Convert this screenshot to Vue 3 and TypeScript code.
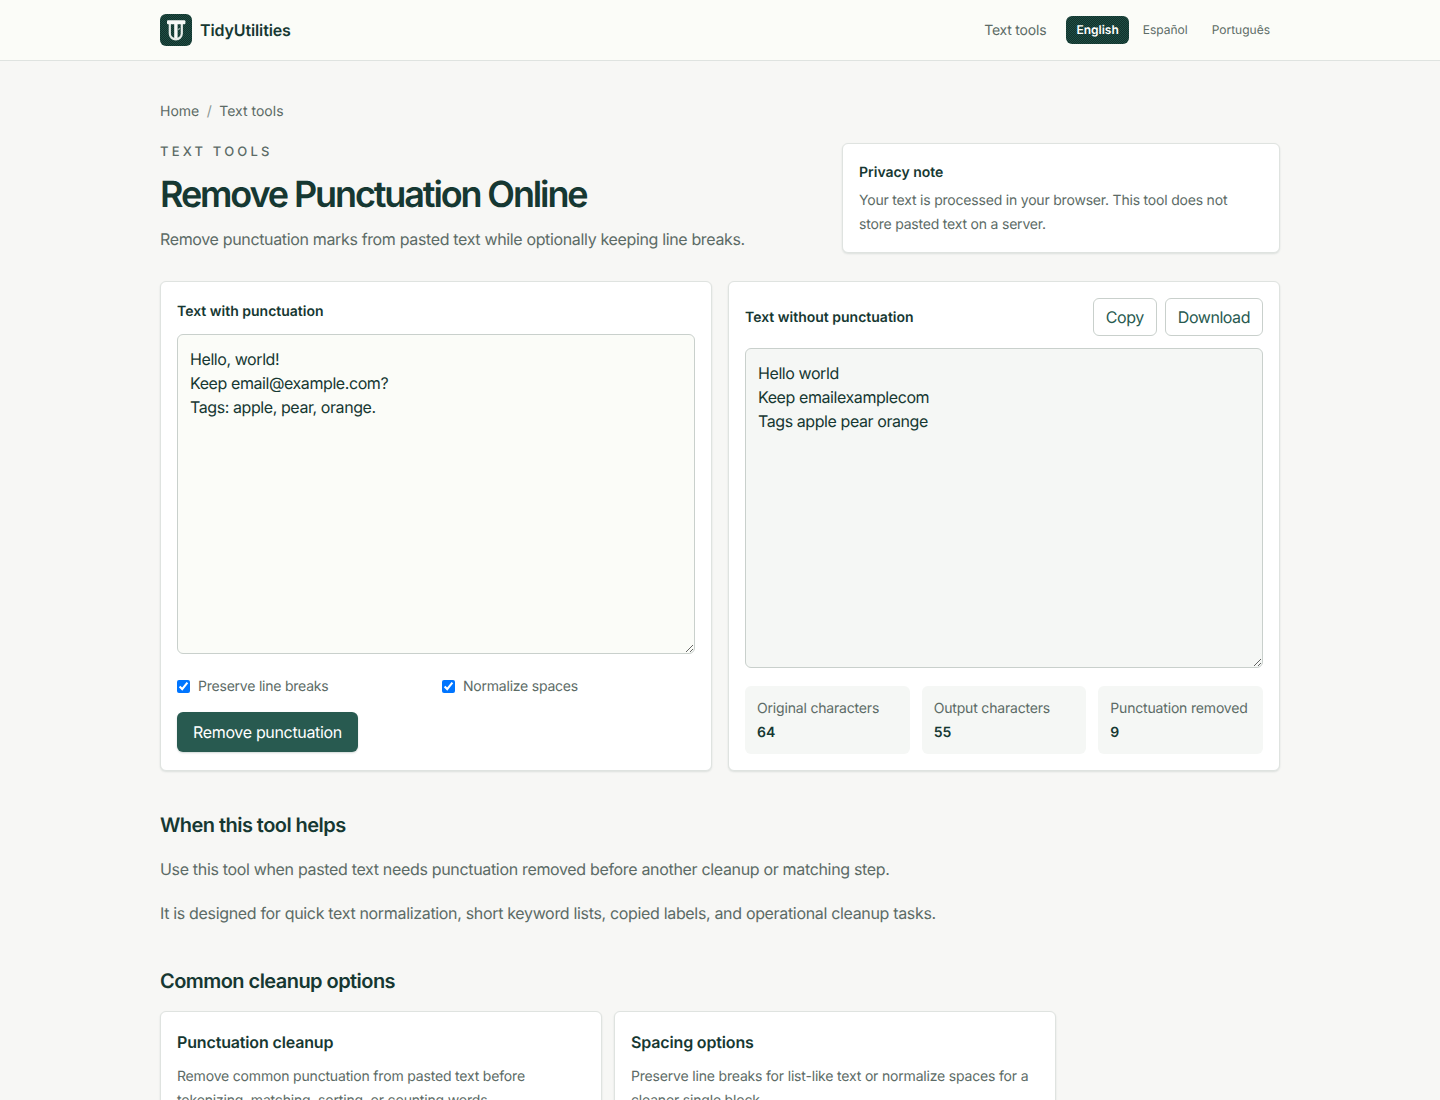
<script setup lang="ts">
import { ref, computed } from 'vue'

const input = ref('Hello, world!\nKeep email@example.com?\nTags: apple, pear, orange.')
const keepBreaks = ref(true)
const normalize = ref(true)
const output = ref('Hello world\nKeep emailexamplecom\nTags apple pear orange')

function clean() {
  let s = input.value.replace(/[.,!?:;@'"()-]/g, '')
  if (!keepBreaks.value) s = s.replace(/\n+/g, ' ')
  if (normalize.value) s = s.replace(/[ \t]+/g, ' ')
  output.value = s
}

const stats = computed(() => [
  { label: 'Original characters', value: 64 },
  { label: 'Output characters', value: 55 },
  { label: 'Punctuation removed', value: 9 },
])

const options = [
  { title: 'Punctuation cleanup', text: 'Remove common punctuation from pasted text before tokenizing, matching, sorting, or counting words.' },
  { title: 'Spacing options', text: 'Preserve line breaks for list-like text or normalize spaces for a cleaner single block.' },
]
</script>

<template>
  <header class="topbar">
    <div class="topbar-in">
      <a class="brand" href="#">
        <svg class="logo" width="32" height="32" viewBox="0 0 32 32" aria-hidden="true">
          <defs>
            <pattern id="dots" width="2" height="2" patternUnits="userSpaceOnUse">
              <rect width="2" height="2" fill="#12302b" />
              <rect width="1" height="1" fill="#1e4f45" />
              <rect x="1" y="1" width="1" height="1" fill="#1e4f45" />
            </pattern>
          </defs>
          <rect width="32" height="32" rx="6" fill="url(#dots)" />
          <path d="M9.8 10v9.4a6 6 0 0 0 12 0V10" fill="none" stroke="#e6ebe8" stroke-width="2.2" />
          <path d="M14.2 10h3.4v14.5h-3.4z" fill="#f7f9f7" />
          <rect x="7" y="6.3" width="18.4" height="4" rx="1" fill="#f7f9f7" />
          <path d="M20 14.5c-.9 0-1.4.5-1.4 1.4" fill="none" stroke="#a9b8b3" stroke-width="1.2" />
        </svg>
        <span>TidyUtilities</span>
      </a>
      <nav class="nav">
        <a class="nav-main" href="#">Text tools</a>
        <a class="lang active" href="#">English</a>
        <a class="lang" href="#">Español</a>
        <a class="lang" href="#">Português</a>
      </nav>
    </div>
  </header>

  <main class="page">
    <div class="crumbs">
      <a href="#">Home</a><span class="sep">/</span><a href="#">Text tools</a>
    </div>

    <section class="hero">
      <div class="hero-text">
        <p class="eyebrow">TEXT TOOLS</p>
        <h1>Remove Punctuation Online</h1>
        <p class="lead">Remove punctuation marks from pasted text while optionally keeping line breaks.</p>
      </div>
      <aside class="card privacy">
        <h2>Privacy note</h2>
        <p>Your text is processed in your browser. This tool does not store pasted text on a server.</p>
      </aside>
    </section>

    <section class="tool">
      <div class="card panel">
        <label class="field-label" for="src">Text with punctuation</label>
        <textarea id="src" v-model="input" class="box"></textarea>
        <div class="checks">
          <label><input v-model="keepBreaks" type="checkbox" /> Preserve line breaks</label>
          <label><input v-model="normalize" type="checkbox" /> Normalize spaces</label>
        </div>
        <button class="primary" @click="clean">Remove punctuation</button>
      </div>

      <div class="card panel">
        <div class="out-head">
          <label class="field-label flat" for="dst">Text without punctuation</label>
          <div class="actions">
            <button class="ghost">Copy</button>
            <button class="ghost">Download</button>
          </div>
        </div>
        <textarea id="dst" v-model="output" class="box readonly" readonly></textarea>
        <div class="stats">
          <div v-for="s in stats" :key="s.label" class="stat">
            <span>{{ s.label }}</span>
            <strong>{{ s.value }}</strong>
          </div>
        </div>
      </div>
    </section>

    <section class="copy">
      <h2>When this tool helps</h2>
      <p>Use this tool when pasted text needs punctuation removed before another cleanup or matching step.</p>
      <p>It is designed for quick text normalization, short keyword lists, copied labels, and operational cleanup tasks.</p>
    </section>

    <section class="copy opts">
      <h2>Common cleanup options</h2>
      <div class="opt-grid">
        <div v-for="o in options" :key="o.title" class="card opt">
          <h3>{{ o.title }}</h3>
          <p>{{ o.text }}</p>
        </div>
      </div>
    </section>
  </main>
</template>

<style>
html, body { margin: 0; background: #f7f7f5; }
</style>

<style scoped>
* { box-sizing: border-box; }
.topbar, .page { font-family: Inter, "Liberation Sans", sans-serif; color: #163832; text-rendering: geometricPrecision; }
.topbar { height: 61px; background: #fbfcf8; border-bottom: 1px solid #dfe3e0; }
.topbar-in { width: 1120px; height: 60px; margin: 0 auto; display: flex; align-items: center; justify-content: space-between; }
.brand { display: flex; align-items: center; gap: 8px; font-size: 16px; font-weight: 600; letter-spacing: -0.12px; color: #163832; text-decoration: none; }
.logo { display: block; }
.nav { display: flex; align-items: center; }
.nav a { text-decoration: none; color: #5c6b66; }
.nav-main { font-size: 14px; letter-spacing: -0.2px; margin-right: 20px; }
.lang { font-size: 12px; padding: 0 10px; height: 28px; line-height: 28px; border-radius: 6px; margin-right: 4px; }
.lang:last-child { margin-right: 0; }
.nav a.active { background: conic-gradient(#12302b 25%, #1e4f45 0 50%, #12302b 0 75%, #1e4f45 0) 0 0 / 2px 2px; color: #fff; font-weight: 600; }

.page { width: 1120px; margin: 0 auto; padding-top: 42px; }
.crumbs { font-size: 14px; line-height: 17px; color: #5c6b66; }
.crumbs a { color: #5c6b66; text-decoration: none; }
.sep { margin: 0 7.5px; color: #8a9692; }

.hero { display: flex; justify-content: space-between; align-items: flex-start; margin-top: 23px; }
.hero-text { width: 650px; }
.eyebrow { margin: 0; font-size: 13px; line-height: 18px; font-weight: 500; letter-spacing: 3.2px; color: #5c6b66; }
h1 { margin: 12px 0 0; font-size: 36px; line-height: 43px; font-weight: 600; letter-spacing: -2.12px; color: #163832; }
.lead { margin: 11px 0 0; font-size: 16px; line-height: 24px; letter-spacing: -0.35px; color: #5c6b66; }

.card { background: #fff; border: 1px solid #dfe3e0; border-radius: 6px; box-shadow: 0 1px 2px rgba(22, 56, 50, 0.12); }
.privacy { width: 438px; padding: 17px 16px 15px; }
.privacy h2 { margin: 0 0 4px; font-size: 14px; line-height: 24px; font-weight: 600; }
.privacy p { margin: 0; font-size: 14px; line-height: 24px; letter-spacing: -0.2px; color: #5c6b66; }

.tool { display: grid; grid-template-columns: 1fr 1fr; gap: 16px; margin-top: 28px; }
.panel { height: 490px; padding: 16px; }
.field-label { display: block; font-size: 14px; line-height: 28px; font-weight: 600; margin-bottom: 8px; }
.field-label.flat { margin-bottom: 0; line-height: 26px; padding-top: 2px; }
.box { display: block; width: 100%; height: 320px; padding: 12px; border: 1px solid #c9d0cc; border-radius: 6px; background: #fbfcf8; font: 400 16px/24px Inter, "Liberation Sans", sans-serif; letter-spacing: -0.42px; color: #163832; outline: none; text-rendering: geometricPrecision; }
.box.readonly { background: #f5f7f5; }

.checks { display: grid; grid-template-columns: 1fr 1fr; gap: 12px; margin-top: 24px; font-size: 14px; line-height: 17px; letter-spacing: -0.22px; color: #5c6b66; }
.checks label { display: flex; align-items: center; gap: 8px; }
.checks input { width: 13px; height: 13px; margin: 0; }
.primary { display: block; margin-top: 17px; height: 40px; padding: 0 16px; border: 0; border-radius: 6px; background: #285a50; color: #fff; font: 400 16px Inter, "Liberation Sans", sans-serif; letter-spacing: -0.33px; box-shadow: 0 1px 2px rgba(22, 56, 50, 0.2); text-rendering: geometricPrecision; }

.out-head { display: flex; justify-content: space-between; align-items: center; margin-bottom: 12px; }
.actions { display: flex; gap: 8px; }
.ghost { height: 38px; padding: 0 12px; background: #fff; border: 1px solid #c9d0cc; border-radius: 6px; color: #285a50; font: 400 16px Inter, "Liberation Sans", sans-serif; letter-spacing: -0.45px; text-rendering: geometricPrecision; }

.stats { display: grid; grid-template-columns: repeat(3, 1fr); gap: 12px; margin-top: 18px; }
.stat { height: 68px; padding: 11px 12px; background: #f5f7f5; border-radius: 6px; font-size: 14px; line-height: 24px; color: #5c6b66; }
.stat span { display: block; letter-spacing: -0.18px; white-space: nowrap; }
.stat strong { display: block; font-weight: 600; color: #163832; }

.copy { margin-top: 40px; }
.copy h2 { margin: 0; font-size: 20px; line-height: 28px; font-weight: 600; letter-spacing: -0.55px; color: #163832; }
.copy p { margin: 16px 0 0; font-size: 16px; line-height: 28px; letter-spacing: -0.33px; color: #5c6b66; }
.opts { margin-top: 40px; }
.opt-grid { display: grid; grid-template-columns: 442px 442px; gap: 12px; margin-top: 16px; }
.opt { padding: 16px; height: 130px; }
.opt h3 { margin: 0; font-size: 16px; line-height: 28px; font-weight: 600; letter-spacing: -0.15px; color: #163832; }
.opt p { margin: 9px 0 0; font-size: 14px; line-height: 24px; letter-spacing: -0.18px; color: #5c6b66; }
</style>
